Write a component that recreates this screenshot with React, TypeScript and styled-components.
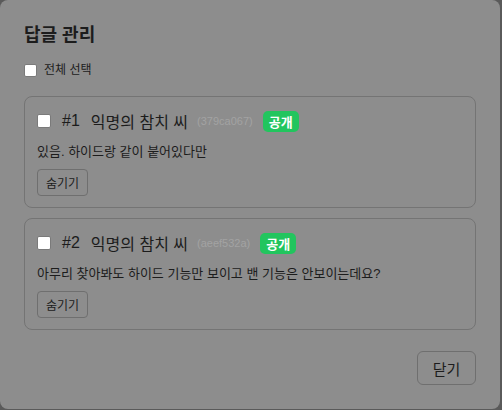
import React from 'react';
import styled, { createGlobalStyle } from 'styled-components';

const GlobalStyle = createGlobalStyle`
  html, body {
    margin: 0;
    padding: 0;
    background: #5a5a5a;
    font-family: "Liberation Sans", "Noto Sans CJK KR", sans-serif;
    color: #1c1c1c;
  }
`;

interface Reply {
  id: number;
  author: string;
  hash: string;
  text: string;
}

const replies: Reply[] = [
  { id: 1, author: '익명의 참치 씨', hash: '379ca067', text: '있음. 하이드랑 같이 붙어있다만' },
  { id: 2, author: '익명의 참치 씨', hash: 'aeef532a', text: '아무리 찾아봐도 하이드 기능만 보이고 밴 기능은 안보이는데요?' },
];

const Modal = styled.div`
  box-sizing: border-box;
  width: 500px;
  height: 409px;
  background: #8d8d8d;
  border-radius: 8px;
  padding: 22px 24px 24px;
  display: flex;
  flex-direction: column;
`;

const Title = styled.h2`
  margin: 0;
  font-size: 18px;
  font-weight: 700;
  line-height: 26px;
`;

const SelectAll = styled.label`
  display: flex;
  align-items: center;
  gap: 7px;
  margin-top: 14px;
  font-size: 12px;
  line-height: 16px;
`;

const Check = styled.input.attrs({ type: 'checkbox' })<{ $size: number }>`
  appearance: none;
  margin: 0;
  width: ${(p) => p.$size}px;
  height: ${(p) => p.$size}px;
  background: #fff;
  border: 1px solid #7a7a7a;
  border-radius: 2px;
  box-sizing: border-box;
  flex-shrink: 0;
`;

const List = styled.div`
  display: flex;
  flex-direction: column;
  gap: 10px;
  margin-top: 18px;
`;

const Card = styled.div`
  border: 1px solid #747474;
  border-radius: 8px;
  padding: 13px 12px 11px;
  display: flex;
  flex-direction: column;
  align-items: flex-start;
`;

const Head = styled.div`
  display: flex;
  align-items: center;
  height: 22px;
`;

const Num = styled.span`
  font-size: 16px;
  margin-left: 11px;
`;

const Author = styled.span`
  font-size: 16px;
  margin-left: 11px;
`;

const Hash = styled.span`
  font-size: 11px;
  color: #a3a3a3;
  margin-left: 9px;
`;

const Badge = styled.span`
  margin-left: 10px;
  background: #22c55e;
  color: #fff;
  font-size: 13px;
  font-weight: 700;
  height: 21px;
  padding: 0 6px;
  border-radius: 5px;
  display: flex;
  align-items: center;
`;

const Body = styled.p`
  margin: 10px 0 0;
  font-size: 13px;
  line-height: 19px;
`;

const SmallButton = styled.button`
  margin-top: 8px;
  height: 27px;
  padding: 0 8px;
  background: transparent;
  border: 1px solid #6f6f6f;
  border-radius: 4px;
  font-family: inherit;
  font-size: 12px;
  color: #1c1c1c;
`;

const Footer = styled.div`
  margin-top: auto;
  display: flex;
  justify-content: flex-end;
`;

const CloseButton = styled.button`
  width: 59px;
  height: 34px;
  background: transparent;
  border: 1px solid #6f6f6f;
  border-radius: 6px;
  font-family: inherit;
  font-size: 15px;
  color: #1c1c1c;
`;

export default function App() {
  return (
    <>
      <GlobalStyle />
      <Modal>
        <Title>답글 관리</Title>
        <SelectAll>
          <Check $size={13} />
          전체 선택
        </SelectAll>
        <List>
          {replies.map((r) => (
            <Card key={r.id}>
              <Head>
                <Check $size={14} />
                <Num>#{r.id}</Num>
                <Author>{r.author}</Author>
                <Hash>({r.hash})</Hash>
                <Badge>공개</Badge>
              </Head>
              <Body>{r.text}</Body>
              <SmallButton>숨기기</SmallButton>
            </Card>
          ))}
        </List>
        <Footer>
          <CloseButton>닫기</CloseButton>
        </Footer>
      </Modal>
    </>
  );
}
